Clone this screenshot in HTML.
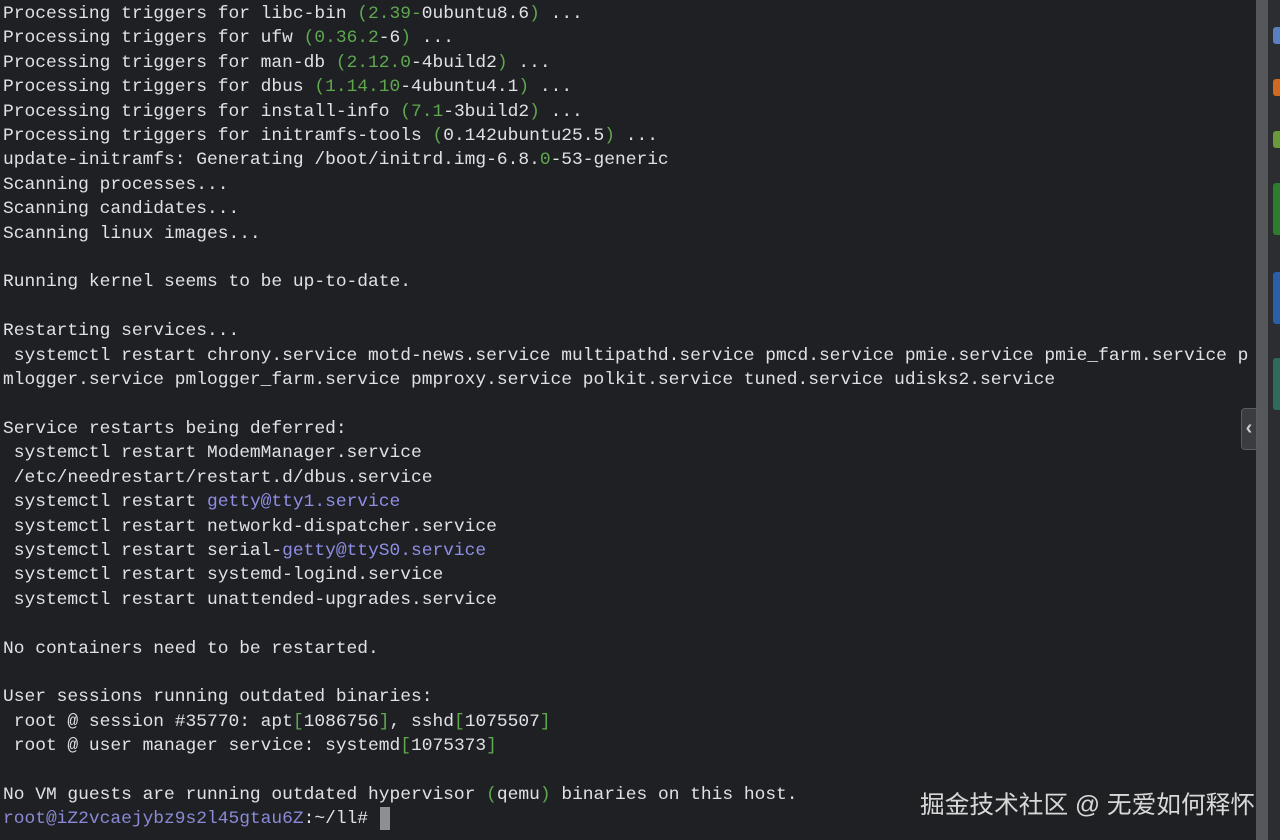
<!DOCTYPE html>
<html><head><meta charset="utf-8"><style>
html,body{margin:0;padding:0;}
body{width:1280px;height:840px;background:#1f2023;overflow:hidden;position:relative;}
pre{margin:0;position:absolute;left:3px;top:2px;font-family:"Liberation Mono",monospace;font-size:17.9px;line-height:24.4px;color:#dfe1e5;white-space:pre;}
.g{color:#5fa84f}.p{color:#8f8ee6}.q{color:#8a8ad6}
.sb{position:absolute;left:1256px;top:0;width:12px;height:840px;background:#55575a;}
.rs{position:absolute;left:1268px;top:0;width:12px;height:840px;background:#2b2d30;}
.blk{position:absolute;left:1273px;width:7px;border-radius:3px 0 0 3px;}
.tab{position:absolute;left:1241px;top:408px;width:14px;height:40px;background:#3a3c3f;border:1px solid #5a5c60;border-radius:4px 0 0 4px;color:#ccc;font:bold 20px "Liberation Sans",sans-serif;line-height:38px;text-align:center;}
.wm{position:absolute;left:920px;top:785px;font-family:"Liberation Sans","Noto Sans CJK SC",sans-serif;font-size:24.7px;color:#d8d8d8;}
.cur{position:absolute;left:380px;top:807px;width:10px;height:23px;background:#8d8f93;}
</style></head><body>
<pre>Processing triggers for libc-bin <span class="g">(2.39-</span>0ubuntu8.6<span class="g">)</span> ...
Processing triggers for ufw <span class="g">(0.36.2</span>-6<span class="g">)</span> ...
Processing triggers for man-db <span class="g">(2.12.0</span>-4build2<span class="g">)</span> ...
Processing triggers for dbus <span class="g">(1.14.10</span>-4ubuntu4.1<span class="g">)</span> ...
Processing triggers for install-info <span class="g">(7.1</span>-3build2<span class="g">)</span> ...
Processing triggers for initramfs-tools <span class="g">(</span>0.142ubuntu25.5<span class="g">)</span> ...
update-initramfs: Generating /boot/initrd.img-6.8.<span class="g">0</span>-53-generic
Scanning processes...
Scanning candidates...
Scanning linux images...

Running kernel seems to be up-to-date.

Restarting services...
 systemctl restart chrony.service motd-news.service multipathd.service pmcd.service pmie.service pmie_farm.service p
mlogger.service pmlogger_farm.service pmproxy.service polkit.service tuned.service udisks2.service

Service restarts being deferred:
 systemctl restart ModemManager.service
 /etc/needrestart/restart.d/dbus.service
 systemctl restart <span class="p">getty@tty1.service</span>
 systemctl restart networkd-dispatcher.service
 systemctl restart serial-<span class="p">getty@ttyS0.service</span>
 systemctl restart systemd-logind.service
 systemctl restart unattended-upgrades.service

No containers need to be restarted.

User sessions running outdated binaries:
 root @ session #35770: apt<span class="g">[</span>1086756<span class="g">]</span>, sshd<span class="g">[</span>1075507<span class="g">]</span>
 root @ user manager service: systemd<span class="g">[</span>1075373<span class="g">]</span>

No VM guests are running outdated hypervisor <span class="g">(</span>qemu<span class="g">)</span> binaries on this host.
<span class="q">root@iZ2vcaejybz9s2l45gtau6Z</span>:~/ll# </pre>
<div class="cur"></div>
<div class="sb"></div>
<div class="rs"></div>
<div class="blk" style="top:27px;height:17px;background:#5a7fc0"></div>
<div class="blk" style="top:79px;height:17px;background:#d2691e"></div>
<div class="blk" style="top:131px;height:17px;background:#6a9a3a"></div>
<div class="blk" style="top:183px;height:52px;background:#2e7d2e"></div>
<div class="blk" style="top:272px;height:52px;background:#2a5fa8"></div>
<div class="blk" style="top:358px;height:52px;background:#2f6a5a"></div>
<div class="tab">‹</div>
<div class="wm">掘金技术社区 @ 无爱如何释怀</div>
</body></html>
